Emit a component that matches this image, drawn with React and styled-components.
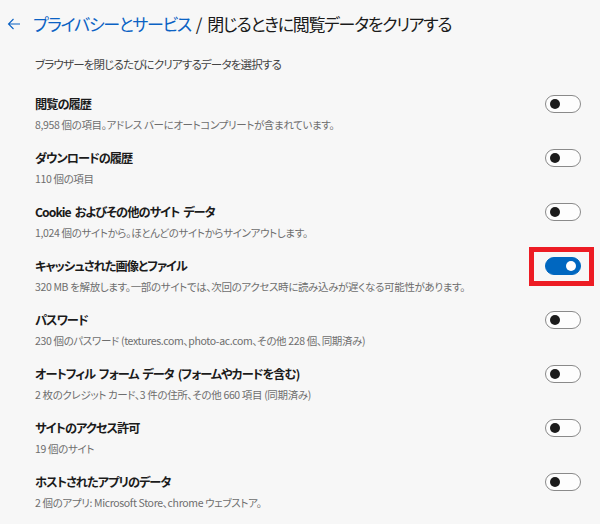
import React from "react";
import styled, { createGlobalStyle } from "styled-components";

const GlobalStyle = createGlobalStyle`
  body {
    margin: 0;
    background: #f7f7f7;
    font-family: "Noto Sans CJK JP", "Noto Sans", sans-serif;
    font-feature-settings: "palt";
    color: #1b1b1b;
  }
`;

const Page = styled.div`
  width: 600px;
  height: 524px;
  overflow: hidden;
  background: #f7f7f7;
`;

const Header = styled.div`
  display: flex;
  align-items: center;
  height: 28px;
  padding: 10px 0 0 7px;
`;

const BackButton = styled.div`
  display: flex;
  align-items: center;
  width: 26px;
  height: 28px;
`;

const Title = styled.h1`
  margin: 0;
  font-size: 17px;
  font-weight: 400;
  letter-spacing: -1.3px;
  line-height: 28px;
  color: #1b1b1b;
  white-space: nowrap;
`;

const Crumb = styled.span`
  color: #0b62c4;
`;

const Slash = styled.span`
  margin: 0 6px 0 5px;
`;

const Subtitle = styled.div`
  margin: 16px 0 13px 35px;
  font-size: 11.5px;
  letter-spacing: -0.8px;
  line-height: 20px;
  color: #444;
`;

const Row = styled.div`
  display: flex;
  align-items: flex-start;
  justify-content: space-between;
  height: 40px;
  padding: 7px 19px 7px 35px;
`;

const Texts = styled.div`
  display: flex;
  flex-direction: column;
  gap: 2px;
`;

const Label = styled.div`
  font-size: 12.2px;
  font-weight: 600;
  letter-spacing: -0.95px;
  word-spacing: 2px;
  line-height: 20px;
  color: #1b1b1b;
`;

const Desc = styled.div`
  font-size: 10.5px;
  letter-spacing: -0.35px;
  line-height: 18px;
  color: #6e6e6e;
`;

const ToggleWrap = styled.div`
  position: relative;
  margin-top: 1px;
`;

const Toggle = styled.div`
  box-sizing: border-box;
  display: flex;
  align-items: center;
  justify-content: ${(p) => (p.$on ? "flex-end" : "flex-start")};
  width: 36px;
  height: 18px;
  padding: 0 4px;
  border-radius: 9px;
  border: 1px solid ${(p) => (p.$on ? "#0067c0" : "#8a8a8a")};
  background: ${(p) => (p.$on ? "#0067c0" : "#fdfdfd")};
`;

const Knob = styled.div`
  width: 10px;
  height: 10px;
  border-radius: 50%;
  background: ${(p) => (p.$on ? "#ffffff" : "#1b1b1b")};
`;

const Highlight = styled.div`
  position: absolute;
  left: -16px;
  top: -10px;
  width: 65px;
  height: 39px;
  box-sizing: border-box;
  border: 5px solid #ed1c24;
`;

const items = [
  { label: "閲覧の履歴", desc: "8,958 個の項目。アドレス バーにオートコンプリートが含まれています。" },
  { label: "ダウンロードの履歴", desc: "110 個の項目" },
  { label: "Cookie およびその他のサイト データ", desc: "1,024 個のサイトから。ほとんどのサイトからサインアウトします。" },
  {
    label: "キャッシュされた画像とファイル",
    desc: "320 MB を解放します。一部のサイトでは、次回のアクセス時に読み込みが遅くなる可能性があります。",
    on: true,
    marked: true,
  },
  { label: "パスワード", desc: "230 個のパスワード (textures.com、photo-ac.com、その他 228 個、同期済み)" },
  { label: "オートフィル フォーム データ (フォームやカードを含む)", desc: "2 枚のクレジット カード、3 件の住所、その他 660 項目 (同期済み)" },
  { label: "サイトのアクセス許可", desc: "19 個のサイト" },
  { label: "ホストされたアプリのデータ", desc: "2 個のアプリ: Microsoft Store、chrome ウェブストア。" },
];

function App() {
  return (
    <Page>
      <GlobalStyle />
      <Header>
        <BackButton>
          <svg width="14" height="12" viewBox="0 0 14 12">
            <path d="M13 6H1.5M6.5 1L1.5 6l5 5" fill="none" stroke="#0b62c4" strokeWidth="1.1" />
          </svg>
        </BackButton>
        <Title>
          <Crumb>プライバシーとサービス</Crumb>
          <Slash>/</Slash>閉じるときに閲覧データをクリアする
        </Title>
      </Header>
      <Subtitle>ブラウザーを閉じるたびにクリアするデータを選択する</Subtitle>
      {items.map((item) => (
        <Row key={item.label}>
          <Texts>
            <Label>{item.label}</Label>
            <Desc>{item.desc}</Desc>
          </Texts>
          <ToggleWrap>
            <Toggle $on={item.on}>
              <Knob $on={item.on} />
            </Toggle>
            {item.marked && <Highlight />}
          </ToggleWrap>
        </Row>
      ))}
    </Page>
  );
}

export default App;
